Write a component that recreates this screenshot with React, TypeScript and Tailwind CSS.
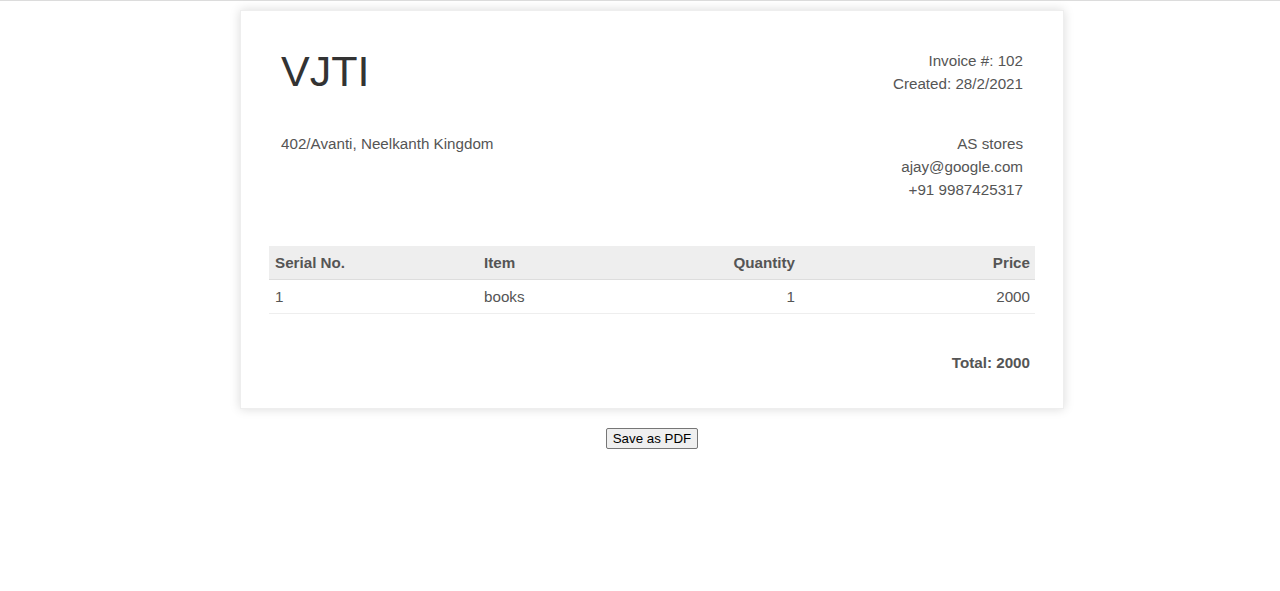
import React from 'react'

const rows = [{ serial: 1, item: 'books', quantity: 1, price: 2000 }]

export default function App() {
  const total = rows.reduce((s, r) => s + r.price * r.quantity, 0)

  return (
    <div className="min-h-[591px] border-t border-[#dcdcdc] bg-white text-[15.2px] leading-[23px] text-[#555] [font-family:'Liberation_Sans',Arial,sans-serif]">
      <div className="ml-[240px] w-[824px] pt-[9px]">
        {/* Invoice box */}
        <div className="border border-[#eee] px-[28px] pt-[38px] pb-[34px] shadow-[0_0_10px_rgba(0,0,0,0.15)]">
          <div className="flex items-start justify-between px-[12px]">
            <div className="text-[43px] leading-[45px] text-[#333]">VJTI</div>
            <div className="text-right">
              <div>Invoice #: 102</div>
              <div>Created: 28/2/2021</div>
            </div>
          </div>

          <div className="mt-[37px] flex items-start justify-between px-[12px]">
            <div>402/Avanti, Neelkanth Kingdom</div>
            <div className="text-right">
              <div>AS stores</div>
              <div>ajay@google.com</div>
              <div>+91 9987425317</div>
            </div>
          </div>

          {/* Items */}
          <div className="mt-[45px]">
            <div className="grid grid-cols-[210px_160px_161px_235px] border-b border-[#ddd] bg-[#eee] font-bold">
              <div className="px-[6px] py-[5px]">Serial No.</div>
              <div className="px-[5px] py-[5px]">Item</div>
              <div className="px-[5px] py-[5px] text-right">Quantity</div>
              <div className="px-[5px] py-[5px] text-right">Price</div>
            </div>
            {rows.map((r) => (
              <div key={r.serial} className="grid grid-cols-[210px_160px_161px_235px] border-b border-[#eee]">
                <div className="px-[6px] py-[5px]">{r.serial}</div>
                <div className="px-[5px] py-[5px]">{r.item}</div>
                <div className="px-[5px] py-[5px] text-right">{r.quantity}</div>
                <div className="px-[5px] py-[5px] text-right">{r.price}</div>
              </div>
            ))}
          </div>

          <div className="mt-[37px] px-[5px] text-right font-bold">Total: {total}</div>
        </div>

        <div className="mt-[19px] flex justify-center">
          <button className="rounded-[2px] border border-[#767676] bg-[#efefef] px-[6px] py-[1px] text-[13.33px] leading-[17px] text-black [font-family:Arial,'Liberation_Sans',sans-serif]">
            Save as PDF
          </button>
        </div>
      </div>
    </div>
  )
}
